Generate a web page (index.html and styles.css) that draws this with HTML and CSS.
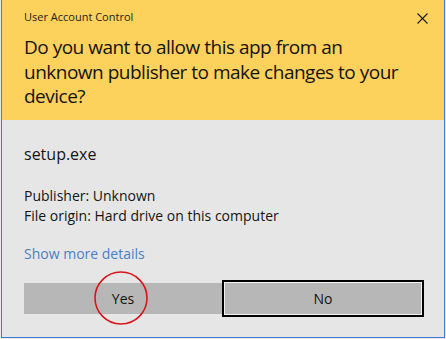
FILE: index.html
```html
<!DOCTYPE html>
<html lang="en">
<head>
  <meta charset="UTF-8" />
  <title>User Account Control</title>
  <link rel="stylesheet" href="styles.css">
</head>
<body>
  <div class="dialog">
    <!-- Yellow warning header -->
    <div class="header">
      <div class="title-row">
        <span class="title">User Account Control</span>
        <svg class="close" width="11" height="11" viewBox="0 0 11 11">
          <path d="M0.5 0.5 L10.5 10.5 M10.5 0.5 L0.5 10.5" stroke="#1a1a1a" stroke-width="1.1" fill="none"/>
        </svg>
      </div>
      <h1 class="question">Do you want to allow this app from an unknown publisher to make changes to your device?</h1>
    </div>

    <!-- Program info -->
    <div class="content">
      <p class="program">setup.exe</p>
      <div class="info">
        <p>Publisher: Unknown</p>
        <p>File origin: Hard drive on this computer</p>
      </div>
      <a class="details">Show more details</a>

      <div class="buttons">
        <div class="yes-wrap">
          <button class="button">Yes</button>
          <svg class="circle" width="60" height="60" viewBox="0 0 60 60">
            <ellipse cx="30" cy="30" rx="26" ry="26" stroke="#d9141b" stroke-width="1.6" fill="none"/>
          </svg>
        </div>
        <button class="button focused">No</button>
      </div>
    </div>
  </div>
</body>
</html>
```

FILE: styles.css
```css
* {
  box-sizing: border-box;
  margin: 0;
  padding: 0;
  font-family: 'Open Sans', 'Noto Sans', sans-serif;
}

body {
  background: #e9e9e9;
}

.dialog {
  width: 444px;
  height: 338px;
  margin-left: 1px;
  background: #e6e6e6;
  border: 1px solid #3d7bd6;
  border-top: none;
  display: flex;
  flex-direction: column;
}

.header {
  background: #fcd15c;
  height: 120px;
  padding: 9px 16px 0 22px;
}

.title-row {
  display: flex;
  justify-content: space-between;
  align-items: center;
  height: 16px;
}

.title {
  font-size: 11px;
  line-height: 16px;
  color: #1e1e1e;
}

.close {
  margin-top: 3px;
}

.question {
  margin-top: 10px;
  font-size: 19px;
  font-weight: 400;
  letter-spacing: -0.5px;
  line-height: 24.5px;
  color: #141414;
  padding-right: 20px;
}

.content {
  padding: 24px 20px 0 22px;
  color: #141414;
}

.program {
  font-size: 16px;
  line-height: 20px;
}

.info {
  margin-top: 22px;
  font-size: 14px;
  line-height: 20px;
}

.details {
  display: block;
  margin-top: 18px;
  font-size: 14px;
  line-height: 20px;
  color: #4a7fc6;
  cursor: pointer;
}

.buttons {
  display: flex;
  align-items: center;
  margin-top: 16px;
  height: 37px;
}

.yes-wrap {
  position: relative;
  width: 198px;
}

.button {
  width: 100%;
  height: 31px;
  background: #b7b7b7;
  border: none;
  font-size: 14px;
  color: #141414;
}

.button.focused {
  width: 202px;
  height: 37px;
  border: 2px solid #000;
  box-shadow: inset 0 0 0 1px #f2f2f2;
}

.circle {
  position: absolute;
  left: 67px;
  top: -15px;
}
```
